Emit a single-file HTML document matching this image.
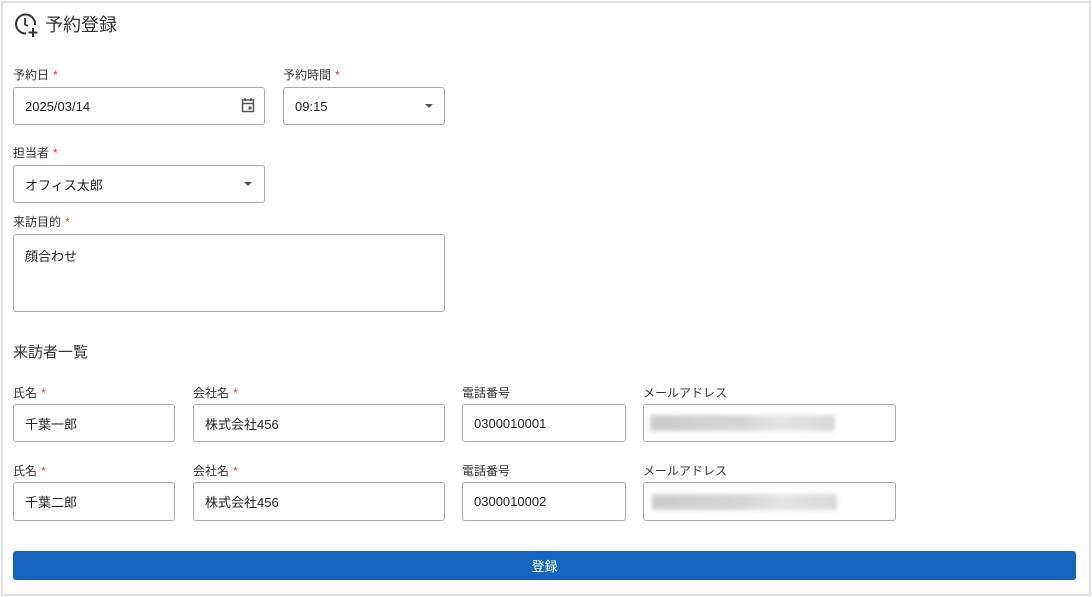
<!DOCTYPE html>
<html><head><meta charset="utf-8"><style>
body{margin:0;width:1092px;height:597px;background:#fff;font-family:"Liberation Sans","Noto Sans CJK JP",sans-serif;color:#222;position:relative;overflow:hidden}
.frame{position:absolute;left:1px;top:1px;width:1086px;height:591px;border:2px solid #e0e0e0}
.a{position:absolute}
.lbl{position:absolute;font-size:12px;color:#333;line-height:14px}
.lbl b{color:#e53935;font-weight:normal;margin-left:4px}
.in{position:absolute;border:1px solid #a8a8a8;border-radius:3px;box-sizing:border-box;font-size:13px;padding-left:11px;display:flex;align-items:center;color:#222}
.blur{position:absolute;height:16px;background:linear-gradient(90deg,#ccc,#d6d6d6 50%,#e4e4e4 70%,#d8d8d8);filter:blur(2px)}
.arrow{position:absolute;width:0;height:0;border-left:4px solid transparent;border-right:4px solid transparent;border-top:4px solid #555}
</style></head><body>
<div class="frame"></div>
<svg class="a" style="left:13px;top:11px" width="26" height="28" viewBox="0 0 26 28"><path d="M13 22.5A9.5 9.5 0 1 1 22 14" fill="none" stroke="#333" stroke-width="2"/><path d="M12 7v6.5l3 1.5" fill="none" stroke="#333" stroke-width="1.8"/><path d="M20 17v9M15.5 21.5h9" stroke="#333" stroke-width="2"/></svg>
<div class="a" style="left:45px;top:11px;font-size:18px;color:#333">予約登録</div>

<div class="lbl" style="left:13px;top:68px">予約日<b>*</b></div>
<div class="in" style="left:13px;top:87px;width:252px;height:38px">2025/03/14</div>
<svg class="a" style="left:241px;top:97px" width="14" height="16" viewBox="0 0 14 16"><rect x="1.5" y="3" width="11" height="11.5" fill="none" stroke="#555" stroke-width="1.5"/><path d="M1.5 6.5h11M4 1v3M10 1v3" stroke="#555" stroke-width="1.5"/><rect x="7.5" y="9.5" width="3" height="3" fill="#555"/></svg>
<div class="lbl" style="left:283px;top:68px">予約時間<b>*</b></div>
<div class="in" style="left:283px;top:87px;width:162px;height:38px">09:15</div>
<div class="arrow" style="left:425px;top:104px"></div>

<div class="lbl" style="left:13px;top:146px">担当者<b>*</b></div>
<div class="in" style="left:13px;top:165px;width:252px;height:38px">オフィス太郎</div>
<div class="arrow" style="left:244px;top:182px"></div>

<div class="lbl" style="left:13px;top:215px">来訪目的<b>*</b></div>
<div class="in" style="left:13px;top:234px;width:432px;height:78px;align-items:flex-start;padding-top:11px">顔合わせ</div>

<div class="a" style="left:13px;top:341px;font-size:15px;color:#333">来訪者一覧</div>

<div class="lbl" style="left:13px;top:386px">氏名<b>*</b></div>
<div class="in" style="left:13px;top:404px;width:162px;height:38px">千葉一郎</div>
<div class="lbl" style="left:193px;top:386px">会社名<b>*</b></div>
<div class="in" style="left:193px;top:404px;width:252px;height:38px">株式会社456</div>
<div class="lbl" style="left:462px;top:386px">電話番号</div>
<div class="in" style="left:462px;top:404px;width:164px;height:38px">0300010001</div>
<div class="lbl" style="left:643px;top:386px">メールアドレス</div>
<div class="in" style="left:643px;top:404px;width:253px;height:38px"></div>
<div class="blur" style="left:650px;top:415px;width:185px"></div>

<div class="lbl" style="left:13px;top:464px">氏名<b>*</b></div>
<div class="in" style="left:13px;top:482px;width:162px;height:39px">千葉二郎</div>
<div class="lbl" style="left:193px;top:464px">会社名<b>*</b></div>
<div class="in" style="left:193px;top:482px;width:252px;height:39px">株式会社456</div>
<div class="lbl" style="left:462px;top:464px">電話番号</div>
<div class="in" style="left:462px;top:482px;width:164px;height:39px">0300010002</div>
<div class="lbl" style="left:643px;top:464px">メールアドレス</div>
<div class="in" style="left:643px;top:482px;width:253px;height:39px"></div>
<div class="blur" style="left:652px;top:494px;width:185px"></div>

<div class="a" style="left:13px;top:551px;width:1063px;height:29px;background:#1565c0;border-radius:3px;color:#fff;font-size:13px;display:flex;align-items:center;justify-content:center">登録</div>
</body></html>
